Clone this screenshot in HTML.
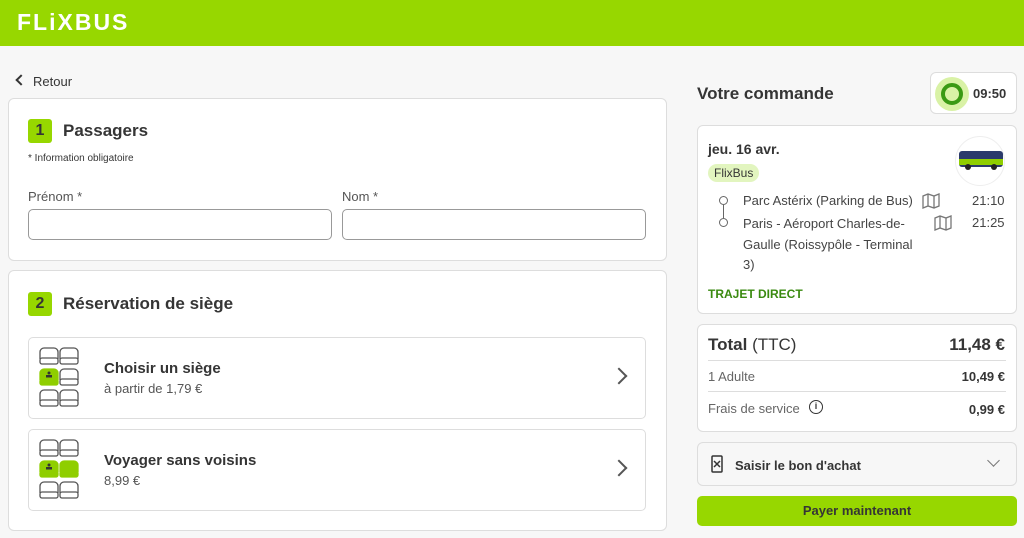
<!DOCTYPE html>
<html><head><meta charset="utf-8"><style>
*{box-sizing:border-box;margin:0;padding:0}
body{width:1024px;height:538px;overflow:hidden;background:#f7f7f7;font-family:"Liberation Sans",sans-serif;color:#353535;position:relative}
.hdr{position:absolute;left:0;top:0;width:1024px;height:46px;background:#97d700}
.logo{position:absolute;left:17px;top:9px;color:#fff;font-weight:bold;font-size:23px;letter-spacing:2px}
.abs{position:absolute}
.card{position:absolute;background:#fff;border:1px solid #ddd;border-radius:6px}
.num{position:absolute;width:24px;height:24px;background:#97d700;border-radius:3px;font-weight:bold;font-size:16px;text-align:center;line-height:24px;color:#353535}
.inp{position:absolute;height:31px;border:1px solid #999;border-radius:5px;background:#fff}
.opt{position:absolute;left:20px;width:618px;height:82px;border:1px solid #ddd;border-radius:5px;background:#fff}
.chev{position:absolute;right:20px;top:32px;width:12px;height:12px;border-right:2px solid #555;border-bottom:2px solid #555;transform:rotate(-45deg)}
</style></head><body>
<div class="hdr"><div class="logo">FLiXBUS</div></div>
<div class="abs" style="left:17px;top:76px;width:8px;height:8px;border-left:2px solid #353535;border-bottom:2px solid #353535;transform:rotate(45deg)"></div>
<div class="abs" style="left:33px;top:74px;font-size:13px">Retour</div>

<div class="card" style="left:8px;top:98px;width:659px;height:163px">
 <div class="num" style="left:19px;top:20px">1</div>
 <div class="abs" style="left:54px;top:22px;font-size:17px;font-weight:bold">Passagers</div>
 <div class="abs" style="left:19px;top:54px;font-size:10px">* Information obligatoire</div>
 <div class="abs" style="left:19px;top:90px;font-size:13px;color:#555">Prénom *</div>
 <div class="abs" style="left:333px;top:90px;font-size:13px;color:#555">Nom *</div>
 <div class="inp" style="left:19px;top:110px;width:304px"></div>
 <div class="inp" style="left:333px;top:110px;width:304px"></div>
</div>

<div class="card" style="left:8px;top:270px;width:659px;height:261px">
 <div class="num" style="left:19px;top:21px">2</div>
 <div class="abs" style="left:54px;top:23px;font-size:17px;font-weight:bold">Réservation de siège</div>
 <div class="opt" style="top:66px;left:19px">
  <svg class="abs" style="left:10px;top:9px" width="40" height="62" viewBox="0 0 40 62" fill="none" stroke="#555" stroke-width="1.3">
   <g id="s"><path d="M1 12V5a4 4 0 0 1 4-4h10a4 4 0 0 1 4 4v7"/><rect x="1" y="11" width="18" height="6" rx="2"/></g>
   <use href="#s" x="20"/><use href="#s" x="20" y="21"/><use href="#s" y="42"/><use href="#s" x="20" y="42"/>
   <path d="M1 33V26a4 4 0 0 1 4-4h10a4 4 0 0 1 4 4v7" fill="#8fce00" stroke="#8fce00"/><rect x="1" y="32" width="18" height="6" rx="2" fill="#8fce00" stroke="#8fce00"/>
   <circle cx="10" cy="26" r="1.5" fill="#333" stroke="none"/><rect x="7" y="28" width="6" height="2.5" fill="#333" stroke="none"/>
  </svg>
  <div class="abs" style="left:75px;top:22px;font-size:15px;font-weight:bold">Choisir un siège</div>
  <div class="abs" style="left:75px;top:43px;font-size:13px;color:#555">à partir de 1,79 €</div>
  <div class="chev"></div>
 </div>
 <div class="opt" style="top:158px;left:19px">
  <svg class="abs" style="left:10px;top:9px" width="40" height="62" viewBox="0 0 40 62" fill="none" stroke="#555" stroke-width="1.3">
   <use href="#s"/><use href="#s" x="20"/><use href="#s" y="42"/><use href="#s" x="20" y="42"/>
   <g fill="#8fce00" stroke="#8fce00"><path d="M1 33V26a4 4 0 0 1 4-4h10a4 4 0 0 1 4 4v7"/><rect x="1" y="32" width="18" height="6" rx="2"/><path d="M21 33V26a4 4 0 0 1 4-4h10a4 4 0 0 1 4 4v7"/><rect x="21" y="32" width="18" height="6" rx="2"/></g>
   <circle cx="10" cy="26" r="1.5" fill="#333" stroke="none"/><rect x="7" y="28" width="6" height="2.5" fill="#333" stroke="none"/>
  </svg>
  <div class="abs" style="left:75px;top:22px;font-size:15px;font-weight:bold">Voyager sans voisins</div>
  <div class="abs" style="left:75px;top:43px;font-size:13px;color:#555">8,99 €</div>
  <div class="chev"></div>
 </div>
</div>

<div class="abs" style="left:697px;top:84px;font-size:17px;font-weight:bold">Votre commande</div>
<div class="card" style="left:930px;top:72px;width:87px;height:42px">
 <div class="abs" style="left:4px;top:4px;width:34px;height:34px;border-radius:50%;background:#d9f2a6"></div>
 <div class="abs" style="left:10px;top:10px;width:22px;height:22px;border-radius:50%;border:4px solid #3a9a14"></div>
 <div class="abs" style="left:42px;top:13px;font-size:13px;font-weight:bold">09:50</div>
</div>

<div class="card" style="left:697px;top:125px;width:320px;height:189px">
 <div class="abs" style="left:10px;top:15px;font-size:14px;font-weight:bold">jeu. 16 avr.</div>
 <div class="abs" style="left:10px;top:38px;padding:2px 6px;background:#e2f5bf;border-radius:10px;font-size:12px">FlixBus</div>
 <div class="abs" style="left:257px;top:10px;width:50px;height:50px;border-radius:50%;border:1px solid #eee"></div>
 <svg class="abs" style="left:260px;top:23px" width="46" height="22"><rect x="1" y="2" width="44" height="16" rx="3" fill="#2b3a6b"/><rect x="1" y="10" width="44" height="6" fill="#8fce00"/><circle cx="10" cy="18" r="3" fill="#222"/><circle cx="36" cy="18" r="3" fill="#222"/></svg>
 <div class="abs" style="left:21px;top:70px;width:9px;height:9px;border:1.3px solid #666;border-radius:50%"></div>
 <div class="abs" style="left:25px;top:79px;width:1.3px;height:13px;background:#666"></div>
 <div class="abs" style="left:21px;top:92px;width:9px;height:9px;border:1.3px solid #666;border-radius:50%"></div>
 <div class="abs" style="left:45px;top:67px;font-size:13px;color:#444">Parc Astérix (Parking de Bus)</div>
 <div class="abs" style="left:45px;top:88px;width:178px;font-size:13px;color:#444;line-height:20.5px">Paris - Aéroport Charles-de-Gaulle (Roissypôle - Terminal 3)</div>
 <svg class="abs" style="left:224px;top:67px" width="18" height="16" fill="none" stroke="#777" stroke-width="1.3"><path d="M1 3l5-2 6 2 5-2v12l-5 2-6-2-5 2z M6 1v12 M12 3v12"/></svg>
 <svg class="abs" style="left:236px;top:89px" width="18" height="16" fill="none" stroke="#777" stroke-width="1.3"><path d="M1 3l5-2 6 2 5-2v12l-5 2-6-2-5 2z M6 1v12 M12 3v12"/></svg>
 <div class="abs" style="left:274px;top:67px;font-size:13px;color:#444">21:10</div>
 <div class="abs" style="left:274px;top:89px;font-size:13px;color:#444">21:25</div>
 <div class="abs" style="left:10px;top:161px;font-size:12px;font-weight:bold;color:#3a8a10">TRAJET DIRECT</div>
</div>

<div class="card" style="left:697px;top:324px;width:320px;height:108px">
 <div class="abs" style="left:10px;top:10px;font-size:17px"><b>Total</b> (TTC)</div>
 <div class="abs" style="right:11px;top:10px;font-size:17px;font-weight:bold">11,48 €</div>
 <div class="abs" style="left:10px;top:35px;width:298px;height:1px;background:#ddd"></div>
 <div class="abs" style="left:10px;top:44px;font-size:13px;color:#666">1 Adulte</div>
 <div class="abs" style="right:11px;top:44px;font-size:13px;font-weight:bold">10,49 €</div>
 <div class="abs" style="left:10px;top:66px;width:298px;height:1px;background:#ddd"></div>
 <div class="abs" style="left:10px;top:76px;font-size:13px;color:#666">Frais de service</div>
 <div class="abs" style="left:111px;top:75px;width:14px;height:14px;border:1.5px solid #333;border-radius:50%;font-size:9px;font-weight:bold;text-align:center;line-height:11px">i</div>
 <div class="abs" style="right:11px;top:77px;font-size:13px;font-weight:bold">0,99 €</div>
</div>

<div class="card" style="left:697px;top:442px;width:320px;height:44px;background:#f7f7f7">
 <svg class="abs" style="left:13px;top:12px" width="12" height="18" fill="none" stroke="#333" stroke-width="1.5"><rect x="1" y="1" width="10" height="16" rx="1"/><path d="M3 6l6 6M9 6l-6 6"/></svg>
 <div class="abs" style="left:37px;top:15px;font-size:13px;font-weight:bold">Saisir le bon d'achat</div>
 <div class="abs" style="right:18px;top:13px;width:9px;height:9px;border-right:1.5px solid #777;border-bottom:1.5px solid #777;transform:rotate(45deg)"></div>
</div>

<div class="abs" style="left:697px;top:496px;width:320px;height:30px;background:#97d700;border-radius:5px;text-align:center;line-height:30px;font-size:13px;font-weight:bold;color:#353535">Payer maintenant</div>
</body></html>
